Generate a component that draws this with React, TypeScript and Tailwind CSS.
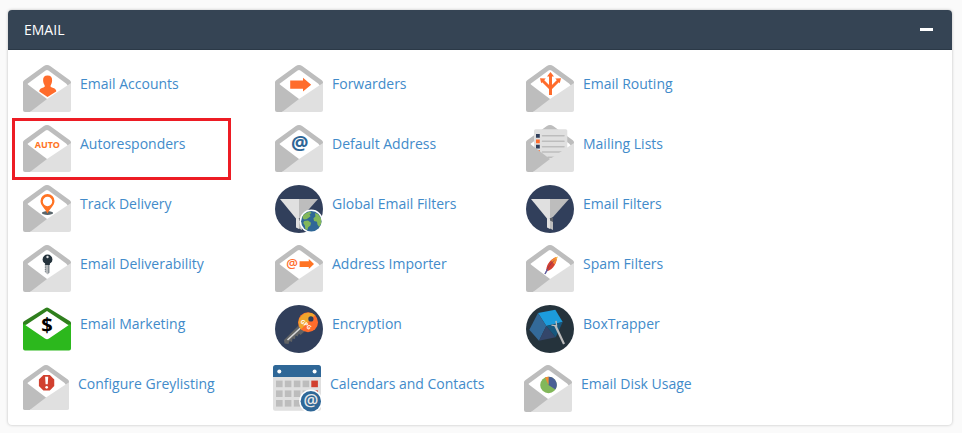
import type { ReactNode } from "react";

const FONT = "'Open Sans', sans-serif";

function Svg({ children, small = false }: { children: ReactNode; small?: boolean }) {
  return (
    <svg viewBox="0 0 48 48" aria-hidden="true" className={small ? "size-[46px] shrink-0" : "size-12 shrink-0"}>
      {children}
    </svg>
  );
}

function Envelope({ children, small }: { children?: ReactNode; small?: boolean }) {
  return (
    <Svg small={small}>
      <path d="M0 17.5Q0 16 1.2 15.2L20.5 1.2Q24-1.2 27.5 1.2L46.8 15.2Q48 16 48 17.5V24H0Z" fill="#bdbdbd" />
      <path d="M4.6 18.8L22.6 5.4Q24 4.4 25.4 5.4L43.4 18.8L45 21L24 36L4.6 20Z" fill="#fff" />
      {children}
      <path d="M0 16.5L4.8 19.4L24 34L26 40L7 47H2Q0 47 0 45Z" fill="#bdbdbd" />
      <path d="M48 18V45Q48 47 46 47H7L24 34Z" fill="#e0e0e0" />
    </Svg>
  );
}

/* Envelope whose symbol sits in front of the body */
function Letter({ children, small = false }: { children: ReactNode; small?: boolean }) {
  return (
    <span className="relative shrink-0">
      <Envelope small={small} />
      <span className="absolute inset-0">
        <Svg small={small}>{children}</Svg>
      </span>
    </span>
  );
}

function Funnel({ children }: { children?: ReactNode }) {
  return (
    <Svg>
      <circle cx="24" cy="24" r="24" fill="#313f5b" />
      <path d="M5 14H24V33.5H21Z" fill="#e0e0e0" />
      <path d="M24 14H43L27 32L24 33.5Z" fill="#bdbdbd" />
      <path d="M21 32L24 33.5V44L21 42.5Z" fill="#e0e0e0" />
      <path d="M24 33.5L27 36V45L24 43.5Z" fill="#bdbdbd" />
      <path d="M24 33H27V37L24 35.5Z" fill="#5c6068" />
      {children}
    </Svg>
  );
}

const accounts = (
  <Letter>
    <path
      d="M24.6 10.6C27.8 10.6 29.2 12.6 29.1 15.3C29.1 17.6 28.4 19.2 27.6 20.4V21.8C29 23 32 23 33.1 25.2L33.2 26.6L24.5 32L16.3 26.6L16.4 25.2C17.5 23 20.3 23 21.7 21.8V20.4C20.9 19.2 20.1 17.6 20.1 15.3C20 12.6 21.4 10.6 24.6 10.6Z"
      fill="#ff6c2c"
    />
  </Letter>
);

const forwarders = (
  <Letter>
    <path d="M15.2 15.6H28V12.8L36.2 19.8L28 26.6V23.8H15.2Z" fill="#ff6c2c" />
  </Letter>
);

const routing = (
  <Letter>
    <g fill="none" stroke="#ff6c2c" strokeWidth="3">
      <path d="M24.5 30V11" />
      <path d="M24.5 23.5L16.5 15.5M24.5 23.5L32.5 15.5" />
    </g>
    <path d="M21 11.5L24.5 7L28 11.5ZM14 13.2L19.8 13.4L15.2 18.2ZM35 13.2L29.2 13.4L33.8 18.2Z" fill="#ff6c2c" />
  </Letter>
);

const auto = (
  <Letter>
    <text x="24.4" y="22.7" textAnchor="middle" fontFamily="'Noto Sans', sans-serif" fontSize="9" fontWeight="700" fill="#ff7323">
      AUTO
    </text>
  </Letter>
);

const defaultAddress = (
  <Letter>
    <text x="24.7" y="25" textAnchor="middle" fontFamily={FONT} fontSize="19.5" fontWeight="700" fill="#2f6797">
      @
    </text>
  </Letter>
);

const mailing = (
  <Envelope>
    <rect x="8" y="4.3" width="33.3" height="36" rx="1.5" fill="#e0e0e0" />
    <path d="M16.5 10.8H38M16.5 16.3H38M16.5 21.7H38M16.5 27H38M22 32.3H33" stroke="#bdbdbd" strokeWidth="1.6" strokeLinecap="round" />
    <path d="M10 9H13.8V12.8H10ZM10 19.7H13.8V23.5H10Z" fill="#313f5b" />
    <path d="M10 14.4H13.8V18.2H10ZM10 25.2H14V29H10Z" fill="#ff6c2c" />
  </Envelope>
);

const track = (
  <Letter>
    <ellipse cx="24.5" cy="28" rx="5.6" ry="1.9" fill="#59656b" />
    <path
      fillRule="evenodd"
      d="M24.5 9A7 7 0 0 1 31.5 16C31.5 20.5 27 23.5 24.5 28.5C22 23.5 17.5 20.5 17.5 16A7 7 0 0 1 24.5 9ZM24.5 11.8A4.7 4.7 0 1 0 24.5 21.2A4.7 4.7 0 1 0 24.5 11.8Z"
      fill="#ff7323"
    />
  </Letter>
);

const globalFilters = (
  <Funnel>
    <circle cx="36.3" cy="36.3" r="11.7" fill="#fff" />
    <circle cx="36.3" cy="36.3" r="10.2" fill="#2f6797" />
    <path d="M28.2 30.2L31 28L35 26.6L36.6 28L34.5 29.3L35.5 31.2L33 33.2L31.3 34.2L29 34.5L27.5 33Z" fill="#82b75a" />
    <path d="M29.2 36L33 35.6L36 37.8L35.4 40.5L33.2 42.2L32.4 45L30.4 44.2L29.8 40.5L28.2 38Z" fill="#82b75a" />
    <path d="M40 28L43.2 29.2L46 33.5L46.4 38L44.2 42L42.4 39.5L42 36.8L39 36L38.4 33.2L40.4 31.4Z" fill="#82b75a" />
  </Funnel>
);

const deliverability = (
  <Letter>
    <path d="M22.2 18H26.8V27.5L24.8 29.4L22.2 27.5Z" fill="#b5b8ba" />
    <path d="M22.4 19V27" stroke="#79838a" strokeWidth="1.2" strokeDasharray="1.4 1" />
    <path d="M25.5 18V28" stroke="#79838a" strokeWidth="0.8" />
    <circle cx="24.5" cy="14.4" r="4.9" fill="#25333c" />
    <path d="M22.2 17H26.8V20H22.2Z" fill="#25333c" />
    <circle cx="24.5" cy="12" r="1.2" fill="#dce0e2" />
  </Letter>
);

const importer = (
  <Letter>
    <text x="17" y="22.8" textAnchor="middle" fontFamily={FONT} fontSize="13" fontWeight="600" fill="#ff6c2c">
      @
    </text>
    <path d="M24.6 16.2H33.8V14L39 19L33.8 24V22H24.6Z" fill="#ff7323" />
  </Letter>
);

const spam = (
  <Letter>
    <path d="M20.2 25C20.5 19.5 25 13.5 30.5 12C31.5 16.5 27.5 24.5 21.2 26.2Z" fill="#d33f30" />
    <path d="M25 15.6C27 13.6 29 12.4 30.5 12C31 14.4 30.2 17 28.6 19.6Z" fill="#f58a32" />
    <path d="M29 12.8L32 11.4L30.6 14.4Z" fill="#f2bd4d" />
    <path d="M28 15.5C24 19.5 21.5 23 19 29" fill="none" stroke="#8c3558" strokeWidth="0.8" />
    <path d="M21.6 24.2L19 29" stroke="#5a61a5" strokeWidth="1.3" />
  </Letter>
);

const marketing = (
  <Svg>
    <path d="M0 18Q0 17 1 16.3L22.5 2.9Q24 2 25.5 2.9L47 16.3Q48 17 48 18V25H0Z" fill="#2f7f1d" />
    <path d="M0 19.5L3 19L24 33L45 19L48 19.5V43.5Q48 45.6 46 45.6H2Q0 45.6 0 43.5Z" fill="#2cb81d" />
    <path d="M2.5 20.2L24 6L45.5 20.2L26 33.6Q24 35 22 33.6Z" fill="#fff" />
    <text x="24" y="26.5" textAnchor="middle" fontFamily={FONT} fontSize="20" fontWeight="700" fill="#000">
      $
    </text>
  </Svg>
);

const encryption = (
  <Svg>
    <circle cx="24" cy="24" r="24" fill="#313f5b" />
    <path d="M24 20L30 26L25.5 30L24 28.5L22.5 31.5L20.5 30.5L20 34L17.5 33.5L17 37L14.5 36L13.5 39L9.5 38.5L9 35Z" fill="#616365" />
    <path d="M26 22.5L12.5 35" stroke="#d8d8d8" strokeWidth="1.6" />
    <circle cx="33" cy="17.2" r="10" fill="#ff6c2c" />
    <path d="M26 24.3A10 10 0 0 1 40 10.1Z" fill="#f0a62c" />
    <circle cx="35.9" cy="13.9" r="2.6" fill="#313f5b" />
    <text
      x="31"
      y="21.6"
      textAnchor="middle"
      transform="rotate(42 31 19.5)"
      fontFamily={FONT}
      fontSize="5.8"
      fontWeight="700"
      fill="#fff"
    >
      GPG
    </text>
  </Svg>
);

const boxTrapper = (
  <Svg>
    <circle cx="24" cy="24" r="24" fill="#25333c" />
    <path d="M12 8L29.3 4.7L36.7 17L20.3 21Z" fill="#1c9cdc" />
    <path d="M12 8L20.3 21L13 35.7L3.3 24.7Z" fill="#336a99" />
    <path d="M20.3 21L29.7 32.3L13 35.7Z" fill="#34466a" />
    <path d="M20.3 21L36.7 17L29.7 32.3Z" fill="#17577d" />
    <path d="M29.3 20.5L38 39" stroke="#bdbdbd" strokeWidth="2.2" />
    <path d="M25.5 20.2L30.6 20.8L30 15.8" fill="none" stroke="#bdbdbd" strokeWidth="1.3" />
  </Svg>
);

const greylisting = (
  <Letter small>
    <path d="M21.3 10.4H28L32.6 15V21.8L28 26.6H21.3L16.6 21.8V15Z" fill="#d1402f" />
    <path d="M23.1 12.2H26.3L25.8 20.2H23.6Z" fill="#fff" />
    <circle cx="24.7" cy="23.3" r="1.4" fill="#fff" />
  </Letter>
);

const calendar = (
  <Svg>
    <path d="M0 11H48V43.7Q48 45.7 46 45.7H2Q0 45.7 0 43.7Z" fill="#e0e0e0" />
    <path d="M0 12V2.5Q0 0 2.5 0H45.5Q48 0 48 2.5V12Z" fill="#2f6797" />
    <circle cx="6.3" cy="6.6" r="2" fill="#fff" />
    <circle cx="41.6" cy="6.6" r="2" fill="#fff" />
    {[15.6, 25.4, 35].map((y) =>
      [3, 11.8, 20.8, 29.6, 38.3].map((x) => (
        <rect key={`${x}-${y}`} x={x} y={y} width="6.6" height="6.6" fill={x > 38 && y < 30 ? "#d1402f" : "#bdbdbd"} />
      )),
    )}
    <circle cx="37.8" cy="36.2" r="11.6" fill="#fff" />
    <circle cx="37.8" cy="36.2" r="10.2" fill="#2f6797" />
    <text x="37.8" y="40.8" textAnchor="middle" fontFamily={FONT} fontSize="16.5" fontWeight="600" fill="#e8e8e8">
      @
    </text>
  </Svg>
);

const diskUsage = (
  <Letter>
    <circle cx="24.5" cy="20" r="8.3" fill="#82b75a" />
    <path d="M24.5 20V11.7A8.3 8.3 0 0 1 31.4 24.6Z" fill="#495f95" />
    <path d="M24.5 20L21 12.5A8.3 8.3 0 0 1 24.5 11.7Z" fill="#f58a32" />
  </Letter>
);

type Entry = { label: string; icon: ReactNode; marked?: boolean };

const entries: Entry[] = [
  { label: "Email Accounts", icon: accounts },
  { label: "Forwarders", icon: forwarders },
  { label: "Email Routing", icon: routing },
  { label: "Autoresponders", icon: auto, marked: true },
  { label: "Default Address", icon: defaultAddress },
  { label: "Mailing Lists", icon: mailing },
  { label: "Track Delivery", icon: track },
  { label: "Global Email Filters", icon: globalFilters },
  { label: "Email Filters", icon: <Funnel /> },
  { label: "Email Deliverability", icon: deliverability },
  { label: "Address Importer", icon: importer },
  { label: "Spam Filters", icon: spam },
  { label: "Email Marketing", icon: marketing },
  { label: "Encryption", icon: encryption },
  { label: "BoxTrapper", icon: boxTrapper },
];

const lastEntries: Entry[] = [
  { label: "Configure Greylisting", icon: greylisting },
  { label: "Calendars and Contacts", icon: calendar },
  { label: "Email Disk Usage", icon: diskUsage },
];

function Item({ label, icon, marked }: Entry) {
  return (
    <li className="relative">
      <a href="#" className="flex h-12 items-start gap-[9px] text-[#428bca] hover:underline">
        {icon}
        <span className="pt-[9px]">{label}</span>
      </a>
      {marked && (
        <span className="pointer-events-none absolute -top-[7px] -left-[11px] h-[62px] w-[219px] border-3 border-[#ed1c24]" />
      )}
    </li>
  );
}

export default function App() {
  return (
    <main className="min-h-screen bg-[#fafafa] pt-[10px] pr-[10px] pb-2 pl-2 font-['Open_Sans',sans-serif] text-sm leading-5">
      <section className="overflow-hidden rounded bg-white shadow-[0_0_3px_rgba(0,0,0,0.25)]">
        <header className="flex h-10 items-center justify-between border-b border-[#2b3947] bg-[#354454] pr-[19px] pl-4 text-white">
          <h2>EMAIL</h2>
          <button type="button" aria-label="Collapse section" className="flex h-5 items-center">
            <span className="h-[3px] w-[13px] bg-white" />
          </button>
        </header>
        <div className="flex flex-col gap-3 px-[15px] pt-[15px] pb-3">
          <ul className="grid grid-cols-[252px_251px_1fr] gap-y-3">
            {entries.map((entry) => (
              <Item key={entry.label} {...entry} />
            ))}
          </ul>
          <ul className="grid grid-cols-[250px_251px_1fr]">
            {lastEntries.map((entry) => (
              <Item key={entry.label} {...entry} />
            ))}
          </ul>
        </div>
      </section>
    </main>
  );
}
